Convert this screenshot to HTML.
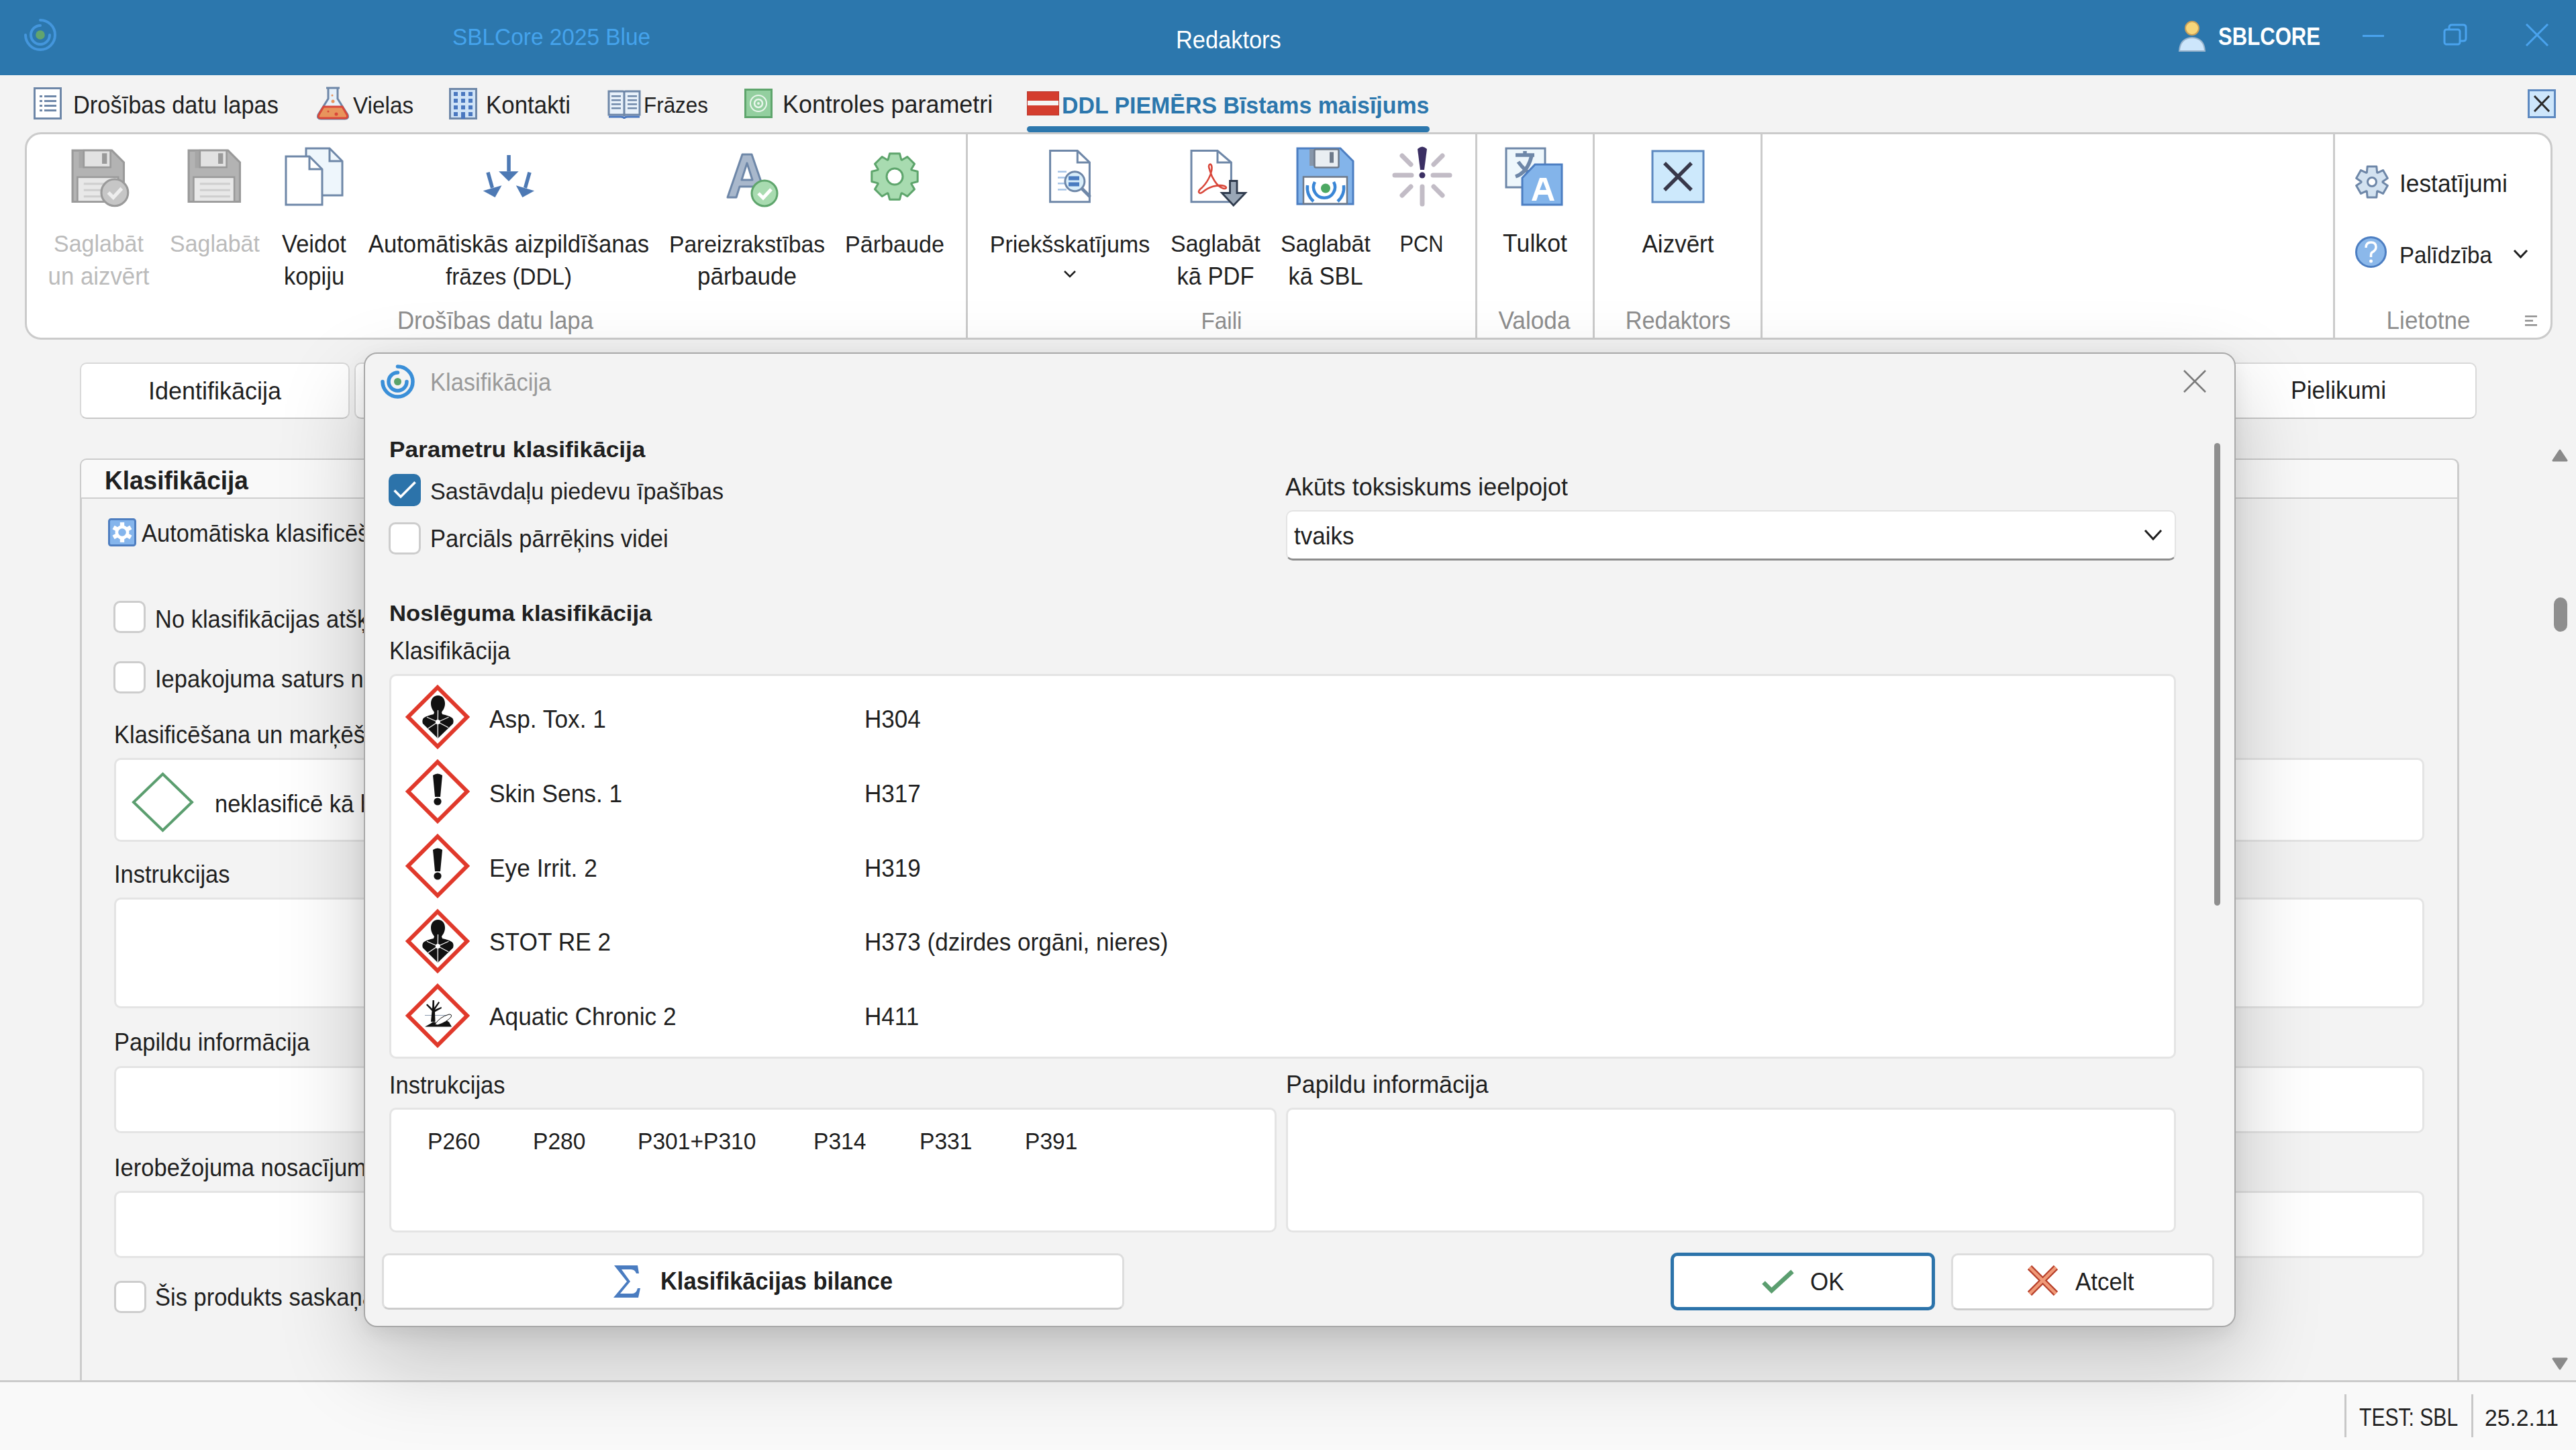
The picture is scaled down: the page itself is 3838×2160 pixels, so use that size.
<!DOCTYPE html>
<html><head><meta charset="utf-8"><title>SBLCore</title>
<style>
html,body{margin:0;padding:0;}
body{width:3838px;height:2160px;position:relative;overflow:hidden;background:#f3f3f3;font-family:"Liberation Sans",sans-serif;}
.t{position:absolute;white-space:nowrap;line-height:1;}
.r{position:absolute;}
svg.r{overflow:visible;}
</style></head><body>
<div class="r" style="left:0px;top:0px;width:3838px;height:112px;background:#2c77ad"></div>
<svg class="r" style="left:34px;top:27px;" width="52" height="50" viewBox="0 0 52 50"><g fill="none" stroke="#4496dc" stroke-width="4" stroke-linecap="round"><path d="M26 3 A22 22 0 1 1 4 25"/><path d="M40 25 A14 14 0 1 1 26 11"/></g><circle cx="26" cy="25" r="6.8" fill="#62a46e"/></svg>
<div class="t" style="left:674px;top:38.7px;font-size:33.4px;color:#45a3ec;font-weight:400;transform:scaleY(1.05);transform-origin:0 28.3px;">SBLCore 2025 Blue</div>
<div class="t" style="left:1752px;top:42.9px;font-size:34.4px;color:#ffffff;font-weight:400;transform:scaleY(1.05);transform-origin:0 29.1px;">Redaktors</div>
<svg class="r" style="left:3245px;top:31px;" width="42" height="46" viewBox="0 0 42 46"><circle cx="21" cy="11" r="10" fill="#f8d67a" stroke="#c9a05a" stroke-width="2"/><path d="M2 45 Q3 26 21 25 Q39 26 40 45 Z" fill="#cde6fb" stroke="#9ab4cc" stroke-width="2"/></svg>
<div class="t" style="left:3305px;top:40.7px;font-size:31.1px;color:#ffffff;font-weight:700;transform:scaleY(1.18);transform-origin:0 26.3px;">SBLCORE</div>
<div class="r" style="left:3520px;top:52px;width:32px;height:3px;background:#4aa3ee"></div>
<svg class="r" style="left:3640px;top:35px;" width="36" height="33" viewBox="0 0 36 33"><g fill="none" stroke="#4aa3ee" stroke-width="3"><rect x="2" y="9" width="23" height="22" rx="3"/><path d="M9 9 V6 Q9 2 13 2 H30 Q34 2 34 6 V22 Q34 26 30 26 H25"/></g></svg>
<svg class="r" style="left:3763px;top:35px;" width="34" height="34" viewBox="0 0 34 34"><g stroke="#4aa3ee" stroke-width="3"><path d="M1 1 L33 33 M33 1 L1 33"/></g></svg>
<div class="r" style="left:0px;top:112px;width:3838px;height:85px;background:#f3f3f3"></div>
<svg class="r" style="left:50px;top:130px;" width="42" height="48" viewBox="0 0 42 48"><rect x="1.5" y="1.5" width="39" height="45" fill="#fff" stroke="#6e87a8" stroke-width="3"/><g fill="#6e87a8"><rect x="9" y="12" width="4" height="3"/><rect x="16" y="12" width="18" height="3"/><rect x="9" y="19" width="4" height="3"/><rect x="16" y="19" width="18" height="3"/><rect x="9" y="26" width="4" height="3"/><rect x="16" y="26" width="18" height="3"/><rect x="9" y="33" width="4" height="3"/><rect x="16" y="33" width="18" height="3"/></g></svg>
<div class="t" style="left:109px;top:139.9px;font-size:34.4px;color:#1f1f1f;font-weight:400;transform:scaleY(1.05);transform-origin:0 29.1px;">Drošības datu lapas</div>
<svg class="r" style="left:471px;top:129px;" width="50" height="50" viewBox="0 0 50 50"><path d="M15 2 H35 M18 2 V18 L3 42 Q1 48 7 48 H43 Q49 48 47 42 L32 18 V2" fill="#e7f1fa" stroke="#6e87a8" stroke-width="3"/><path d="M11 30 H39 L46 42 Q48 47 43 47 H7 Q2 47 4 42 Z" fill="#e8945c" stroke="#d9473a" stroke-width="3"/><circle cx="25" cy="22" r="2.5" fill="#e8945c"/><circle cx="24" cy="13" r="1.5" fill="#e8945c"/><circle cx="30" cy="41" r="2.5" fill="#d9473a"/><circle cx="18" cy="37" r="1.5" fill="#d9473a"/></svg>
<div class="t" style="left:526px;top:140.8px;font-size:33.3px;color:#1f1f1f;font-weight:400;transform:scaleY(1.05);transform-origin:0 28.2px;">Vielas</div>
<svg class="r" style="left:669px;top:131px;" width="42" height="47" viewBox="0 0 42 47"><rect x="1.5" y="1.5" width="39" height="44" fill="#cfe3f7" stroke="#6e87a8" stroke-width="3"/><g fill="#4a78c0"><rect x="7" y="6" width="6" height="6"/><rect x="18" y="6" width="6" height="6"/><rect x="29" y="6" width="6" height="6"/><rect x="7" y="16" width="6" height="6"/><rect x="18" y="16" width="6" height="6"/><rect x="29" y="16" width="6" height="6"/><rect x="7" y="26" width="6" height="6"/><rect x="18" y="26" width="6" height="6"/><rect x="29" y="26" width="6" height="6"/><rect x="7" y="36" width="6" height="6"/><rect x="29" y="36" width="6" height="6"/><rect x="18" y="36" width="6" height="10"/></g></svg>
<div class="t" style="left:724px;top:139.5px;font-size:34.9px;color:#1f1f1f;font-weight:400;transform:scaleY(1.05);transform-origin:0 29.5px;">Kontakti</div>
<svg class="r" style="left:905px;top:133px;" width="50" height="45" viewBox="0 0 50 45"><path d="M2 3 H23 Q25 3 25 5 V40 Q25 38 23 38 H2 Z M48 3 H27 Q25 3 25 5 V40 Q25 38 27 38 H48 Z" fill="#e8f1fa" stroke="#6e87a8" stroke-width="3"/><path d="M2 41 H20 Q25 41 25 44 Q25 41 30 41 H48" fill="none" stroke="#4a78c0" stroke-width="3"/><g fill="#6e87a8"><rect x="6" y="9" width="14" height="2.5"/><rect x="6" y="15" width="14" height="2.5"/><rect x="6" y="21" width="14" height="2.5"/><rect x="6" y="27" width="14" height="2.5"/><rect x="30" y="9" width="14" height="2.5"/><rect x="30" y="15" width="14" height="2.5"/><rect x="30" y="21" width="14" height="2.5"/><rect x="30" y="27" width="14" height="2.5"/></g></svg>
<div class="t" style="left:959px;top:142.4px;font-size:31.4px;color:#1f1f1f;font-weight:400;transform:scaleY(1.05);transform-origin:0 26.6px;">Frāzes</div>
<svg class="r" style="left:1109px;top:132px;" width="42" height="44" viewBox="0 0 42 44"><rect x="1.5" y="1.5" width="39" height="41" fill="#93cf9f" stroke="#5ea56c" stroke-width="3"/><circle cx="21" cy="22" r="12" fill="none" stroke="#e9f6ec" stroke-width="2"/><circle cx="21" cy="22" r="6" fill="none" stroke="#e9f6ec" stroke-width="2.5"/><circle cx="21" cy="22" r="2" fill="#e9f6ec"/></svg>
<div class="t" style="left:1166px;top:138.6px;font-size:35.9px;color:#1f1f1f;font-weight:400;transform:scaleY(1.05);transform-origin:0 30.4px;">Kontroles parametri</div>
<svg class="r" style="left:1530px;top:136px;" width="48" height="36" viewBox="0 0 48 36"><rect x="0" y="0" width="48" height="36" fill="#d43d2e"/><rect x="0" y="14" width="48" height="7" fill="#f4f4f4"/><rect x="0.5" y="0.5" width="47" height="35" fill="none" stroke="#b8352a" stroke-width="1"/></svg>
<div class="t" style="left:1582px;top:140.8px;font-size:33.9px;color:#2c77ad;font-weight:700;transform:scaleY(1.05);transform-origin:0 28.7px;">DDL PIEMĒRS Bīstams maisījums</div>
<div class="r" style="left:1530px;top:188px;width:600px;height:9px;background:#2c77ad;border-radius:5px"></div>
<svg class="r" style="left:3766px;top:133px;" width="42" height="43" viewBox="0 0 42 43"><rect x="1.5" y="1.5" width="39" height="40" fill="#cde6fb" stroke="#5d89c0" stroke-width="3"/><path d="M10 10 L32 33 M32 10 L10 33" stroke="#2a2a2a" stroke-width="3"/></svg>
<div class="r" style="left:119px;top:540px;width:402px;height:84px;background:#fff;border:2px solid #d9d9d9;border-bottom-color:#c8c8c8;border-radius:10px;box-sizing:border-box"></div>
<div class="t" style="left:-80px;width:800px;text-align:center;top:564.5px;font-size:36px;color:#1f1f1f;font-weight:400;transform:scaleY(1.05);transform-origin:0 30.5px;">Identifikācija</div>
<div class="r" style="left:528px;top:540px;width:172px;height:84px;background:#fff;border:2px solid #d9d9d9;border-bottom-color:#c8c8c8;border-radius:10px;box-sizing:border-box"></div>
<div class="r" style="left:3200px;top:540px;width:490px;height:84px;background:#fff;border:2px solid #d9d9d9;border-bottom-color:#c8c8c8;border-radius:10px;box-sizing:border-box"></div>
<div class="t" style="left:3413px;top:564.9px;font-size:35.5px;color:#1f1f1f;font-weight:400;transform:scaleY(1.05);transform-origin:0 30.1px;">Pielikumi</div>
<div class="r" style="left:119px;top:683px;width:3545px;height:1397px;border:3px solid #cccccc;border-radius:10px;box-sizing:border-box;background:#f3f3f3"></div>
<div class="r" style="left:121px;top:685px;width:3540px;height:58px;background:#f9f9f9;border-bottom:2px solid #cfcfcf;border-radius:8px 8px 0 0;box-sizing:border-box"></div>
<div class="t" style="left:156px;top:697.7px;font-size:37px;color:#1f1f1f;font-weight:700;transform:scaleY(1.05);transform-origin:0 31.3px;">Klasifikācija</div>
<svg class="r" style="left:161px;top:772px;" width="42" height="42" viewBox="0 0 42 42"><rect x="1.5" y="1.5" width="39" height="39" rx="3" fill="#85b5ec" stroke="#4e7ec0" stroke-width="3"/><g transform="translate(21 21)" fill="#fff"><rect x="-3.2" y="-14.9" width="6.4" height="29.8"/><rect x="-3.2" y="-14.9" width="6.4" height="29.8" transform="rotate(60)"/><rect x="-3.2" y="-14.9" width="6.4" height="29.8" transform="rotate(120)"/><circle r="10.5"/><circle r="5.8" fill="#85b5ec"/></g></svg>
<div class="t" style="left:211px;top:777.8px;font-size:34.5px;color:#1f1f1f;font-weight:400;transform:scaleY(1.05);transform-origin:0 29.2px;">Automātiska klasificēšana</div>
<div class="r" style="left:169px;top:895px;width:48px;height:48px;background:#fff;border:3px solid #cdcdcd;border-radius:10px;box-sizing:border-box"></div>
<div class="t" style="left:231px;top:905.8px;font-size:34.5px;color:#1f1f1f;font-weight:400;transform:scaleY(1.05);transform-origin:0 29.2px;">No klasifikācijas atšķirīgs</div>
<div class="r" style="left:169px;top:985px;width:48px;height:48px;background:#fff;border:3px solid #cdcdcd;border-radius:10px;box-sizing:border-box"></div>
<div class="t" style="left:231px;top:994.8px;font-size:34.5px;color:#1f1f1f;font-weight:400;transform:scaleY(1.05);transform-origin:0 29.2px;">Iepakojuma saturs nepārsniedz</div>
<div class="t" style="left:170px;top:1077.8px;font-size:34.5px;color:#1f1f1f;font-weight:400;transform:scaleY(1.05);transform-origin:0 29.2px;">Klasificēšana un marķēšana</div>
<div class="r" style="left:170px;top:1129px;width:3442px;height:125px;background:#fff;border:3px solid #e4e4e4;border-radius:10px;box-sizing:border-box"></div>
<svg class="r" style="left:195px;top:1150px;" width="95" height="90" viewBox="0 0 95 90"><path d="M47.5 3 L91 45 L47.5 87 L4 45 Z" fill="none" stroke="#5b9e6f" stroke-width="4"/></svg>
<div class="t" style="left:320px;top:1180.8px;font-size:34.5px;color:#1f1f1f;font-weight:400;transform:scaleY(1.05);transform-origin:0 29.2px;">neklasificē kā bīstamu</div>
<div class="t" style="left:170px;top:1285.8px;font-size:34.5px;color:#1f1f1f;font-weight:400;transform:scaleY(1.05);transform-origin:0 29.2px;">Instrukcijas</div>
<div class="r" style="left:170px;top:1337px;width:3442px;height:165px;background:#fff;border:3px solid #e4e4e4;border-radius:10px;box-sizing:border-box"></div>
<div class="t" style="left:170px;top:1535.8px;font-size:34.5px;color:#1f1f1f;font-weight:400;transform:scaleY(1.05);transform-origin:0 29.2px;">Papildu informācija</div>
<div class="r" style="left:170px;top:1588px;width:3442px;height:100px;background:#fff;border:3px solid #e4e4e4;border-radius:10px;box-sizing:border-box"></div>
<div class="t" style="left:170px;top:1722.8px;font-size:34.5px;color:#1f1f1f;font-weight:400;transform:scaleY(1.05);transform-origin:0 29.2px;">Ierobežojuma nosacījumi</div>
<div class="r" style="left:170px;top:1774px;width:3442px;height:100px;background:#fff;border:3px solid #e4e4e4;border-radius:10px;box-sizing:border-box"></div>
<div class="r" style="left:170px;top:1908px;width:48px;height:48px;background:#fff;border:3px solid #cdcdcd;border-radius:10px;box-sizing:border-box"></div>
<div class="t" style="left:231px;top:1915.8px;font-size:34.5px;color:#1f1f1f;font-weight:400;transform:scaleY(1.05);transform-origin:0 29.2px;">Šis produkts saskaņā ar</div>
<svg class="r" style="left:3800px;top:664px;" width="28" height="28" viewBox="0 0 28 28"><path d="M14 7 L24 22 H4 Z" fill="#8a8a8a" stroke="#8a8a8a" stroke-width="3" stroke-linejoin="round"/></svg>
<div class="r" style="left:3805px;top:890px;width:20px;height:51px;background:#8e8e8e;border-radius:10px"></div>
<svg class="r" style="left:3800px;top:2017px;" width="28" height="28" viewBox="0 0 28 28"><path d="M14 22 L24 7 H4 Z" fill="#8a8a8a" stroke="#8a8a8a" stroke-width="3" stroke-linejoin="round"/></svg>
<div class="r" style="left:0px;top:2056px;width:3838px;height:104px;background:#f9f9f9;border-top:3px solid #cbcbcb;box-sizing:border-box"></div>
<div class="r" style="left:3493px;top:2077px;width:3px;height:64px;background:#c8c8c8"></div>
<div class="r" style="left:3682px;top:2077px;width:3px;height:64px;background:#c8c8c8"></div>
<div class="t" style="left:3515px;top:2098.5px;font-size:30.1px;color:#1f1f1f;font-weight:400;transform:scaleY(1.22);transform-origin:0 25.5px;">TEST: SBL</div>
<div class="t" style="left:3702px;top:2095.5px;font-size:33.7px;color:#1f1f1f;font-weight:400;transform:scaleY(1.05);transform-origin:0 28.5px;">25.2.11</div>
<div class="r" style="left:37px;top:197px;width:3766px;height:309px;background:#fff;border:3px solid #cbcbcb;border-radius:24px;box-sizing:border-box"></div>
<div class="r" style="left:1439px;top:199px;width:3px;height:305px;background:#cbcbcb"></div>
<div class="r" style="left:2198px;top:199px;width:3px;height:305px;background:#cbcbcb"></div>
<div class="r" style="left:2373px;top:199px;width:3px;height:305px;background:#cbcbcb"></div>
<div class="r" style="left:2623px;top:199px;width:3px;height:305px;background:#cbcbcb"></div>
<div class="r" style="left:3476px;top:199px;width:3px;height:305px;background:#cbcbcb"></div>
<svg class="r" style="left:106px;top:222px;" width="90" height="90" viewBox="0 0 86 86"><path d="M2 2 H58 L75 19 V75 H2 Z" fill="#b3b3b3" stroke="#9a9a9a" stroke-width="3"/><rect x="11" y="3" width="8" height="24" fill="#a6a6a6"/><rect x="18" y="2" width="38" height="24" fill="#e2e2e2" stroke="#9a9a9a" stroke-width="2.5"/><rect x="44" y="6" width="7" height="15" fill="#9a9a9a"/><rect x="9" y="40" width="58" height="35" fill="#e8e8e8" stroke="#9a9a9a" stroke-width="2.5"/><g fill="#cfcfcf"><rect x="18" y="48" width="43" height="3"/><rect x="18" y="57" width="43" height="3"/><rect x="18" y="66" width="43" height="3"/></g><circle cx="62" cy="62" r="19" fill="#c6c6c6" stroke="#9a9a9a" stroke-width="3"/><path d="M53 62 L60 69 L72 56" fill="none" stroke="#eeeeee" stroke-width="5"/></svg>
<div class="t" style="left:-253px;width:800px;text-align:center;top:347.3px;font-size:33.9px;color:#bbbbbb;font-weight:400;transform:scaleY(1.05);transform-origin:0 28.7px;">Saglabāt</div>
<div class="t" style="left:-253px;width:800px;text-align:center;top:394.5px;font-size:34.8px;color:#bbbbbb;font-weight:400;transform:scaleY(1.05);transform-origin:0 29.5px;">un aizvērt</div>
<svg class="r" style="left:279px;top:222px;" width="90" height="90" viewBox="0 0 86 86"><path d="M2 2 H58 L75 19 V75 H2 Z" fill="#b3b3b3" stroke="#9a9a9a" stroke-width="3"/><rect x="11" y="3" width="8" height="24" fill="#a6a6a6"/><rect x="18" y="2" width="38" height="24" fill="#e2e2e2" stroke="#9a9a9a" stroke-width="2.5"/><rect x="44" y="6" width="7" height="15" fill="#9a9a9a"/><rect x="9" y="40" width="58" height="35" fill="#e8e8e8" stroke="#9a9a9a" stroke-width="2.5"/><g fill="#cfcfcf"><rect x="18" y="48" width="43" height="3"/><rect x="18" y="57" width="43" height="3"/><rect x="18" y="66" width="43" height="3"/></g></svg>
<div class="t" style="left:-80px;width:800px;text-align:center;top:347.3px;font-size:33.9px;color:#bbbbbb;font-weight:400;transform:scaleY(1.05);transform-origin:0 28.7px;">Saglabāt</div>
<svg class="r" style="left:424px;top:219px;" width="88" height="88" viewBox="0 0 88 88"><path d="M32 2 H67 L86 21 V72 H32 Z" fill="#eef6fc" stroke="#6e87a8" stroke-width="3"/><path d="M67 2 V21 H86" fill="none" stroke="#6e87a8" stroke-width="3"/><path d="M2 14 H37 L56 33 V86 H2 Z" fill="#fff" stroke="#6e87a8" stroke-width="3"/><path d="M37 14 V33 H56" fill="none" stroke="#6e87a8" stroke-width="3"/></svg>
<div class="t" style="left:68px;width:800px;text-align:center;top:346.8px;font-size:34.5px;color:#1f1f1f;font-weight:400;transform:scaleY(1.05);transform-origin:0 29.2px;">Veidot</div>
<div class="t" style="left:68px;width:800px;text-align:center;top:394.8px;font-size:34.5px;color:#1f1f1f;font-weight:400;transform:scaleY(1.05);transform-origin:0 29.2px;">kopiju</div>
<svg class="r" style="left:716px;top:229px;" width="84" height="68" viewBox="0 0 84 68"><g fill="#4d79b4"><rect x="39.3" y="2" width="5.5" height="24.5"/><path d="M27.1 26.3 H56.6 L42 41 Z"/><path d="M8.3 28.5 L13.6 27.1 L20 50 L15 51.7 Z"/><path d="M3.7 55.3 L31.5 47.3 L21.6 65 Z"/><path d="M70.4 27.1 L75.7 28.5 L69 51.7 L64 50 Z"/><path d="M52.8 47.3 L80.1 55.3 L62.4 65 Z"/></g></svg>
<div class="t" style="left:358px;width:800px;text-align:center;top:346.6px;font-size:34.7px;color:#1f1f1f;font-weight:400;transform:scaleY(1.05);transform-origin:0 29.4px;">Automātiskās aizpildīšanas</div>
<div class="t" style="left:358px;width:800px;text-align:center;top:395.9px;font-size:33.2px;color:#1f1f1f;font-weight:400;transform:scaleY(1.05);transform-origin:0 28.1px;">frāzes (DDL)</div>
<svg class="r" style="left:1082px;top:228px;" width="78" height="82" viewBox="0 0 78 82"><path d="M2 66 L24 2 H38 L60 66 H47 L42 50 H20 L15 66 Z M23 40 H39 L31 15 Z" fill="#a9b8cc" stroke="#6e87a8" stroke-width="3" stroke-linejoin="round"/><circle cx="57" cy="60" r="19" fill="#a8dbb0" stroke="#5ea56c" stroke-width="3"/><path d="M48 60 L55 67 L67 54" fill="none" stroke="#fff" stroke-width="5"/></svg>
<div class="t" style="left:713px;width:800px;text-align:center;top:347.5px;font-size:33.7px;color:#1f1f1f;font-weight:400;transform:scaleY(1.05);transform-origin:0 28.5px;">Pareizrakstības</div>
<div class="t" style="left:713px;width:800px;text-align:center;top:394.4px;font-size:35.0px;color:#1f1f1f;font-weight:400;transform:scaleY(1.05);transform-origin:0 29.6px;">pārbaude</div>
<svg class="r" style="left:1297px;top:225px;" width="72" height="76" viewBox="0 0 72 76"><polygon points="26.16,12.86 28.50,3.81 43.50,3.81 45.84,12.86 46.82,13.26 54.87,8.52 65.48,19.13 60.74,27.18 61.14,28.16 70.19,30.50 70.19,45.50 61.14,47.84 60.74,48.82 65.48,56.87 54.87,67.48 46.82,62.74 45.84,63.14 43.50,72.19 28.50,72.19 26.16,63.14 25.18,62.74 17.13,67.48 6.52,56.87 11.26,48.82 10.86,47.84 1.81,45.50 1.81,30.50 10.86,28.16 11.26,27.18 6.52,19.13 17.13,8.52 25.18,13.26" fill="#a8dbb0" stroke="#5ea56c" stroke-width="3" stroke-linejoin="round"/><circle cx="36" cy="38" r="12" fill="#fff" stroke="#5ea56c" stroke-width="3"/></svg>
<div class="t" style="left:933px;width:800px;text-align:center;top:347.1px;font-size:34.1px;color:#1f1f1f;font-weight:400;transform:scaleY(1.05);transform-origin:0 28.9px;">Pārbaude</div>
<svg class="r" style="left:1562px;top:222px;" width="68" height="82" viewBox="0 0 68 82"><path d="M2.6 2.6 H43.3 L61.4 20 V78.8 H2.6 Z" fill="#fff" stroke="#6e87a8" stroke-width="3"/><path d="M43.3 2.6 V20 H61.4" fill="none" stroke="#6e87a8" stroke-width="3"/><g fill="#a6c4e6"><rect x="14" y="32.5" width="13" height="2.5"/><rect x="14" y="41.3" width="13" height="2.5"/><rect x="14" y="50" width="13" height="2.5"/><rect x="14" y="59.2" width="13" height="2.5"/></g><path d="M50 59 L61 70" stroke="#6e87a8" stroke-width="5" stroke-linecap="round"/><circle cx="39.4" cy="48.2" r="14.5" fill="#d9eefa" stroke="#6e87a8" stroke-width="3"/><g fill="#4a7cc0"><rect x="30" y="40.5" width="16" height="6"/><rect x="30" y="49.5" width="16" height="6"/></g></svg>
<div class="t" style="left:1194px;width:800px;text-align:center;top:347.1px;font-size:34.1px;color:#1f1f1f;font-weight:400;transform:scaleY(1.05);transform-origin:0 28.9px;">Priekšskatījums</div>
<svg class="r" style="left:1584px;top:402px;" width="20" height="12" viewBox="0 0 20 12"><path d="M2 2 L10 10 L18 2" fill="none" stroke="#1f1f1f" stroke-width="2.5"/></svg>
<svg class="r" style="left:1772px;top:222px;" width="86" height="88" viewBox="0 0 86 88"><path d="M3 2.6 H42 L62.4 20 V78.8 H3 Z" fill="#fff" stroke="#6e87a8" stroke-width="3"/><path d="M42 2.6 V20 H62.4" fill="none" stroke="#6e87a8" stroke-width="3"/><path d="M30 30 C27 22 33 20 33.5 27 C34 37 26 52 16 60 C12 64 15 68 20 64 C28 57 42 52 52 55 C57 57 55 60 50 58.5 C41 56 33 42 30 30 Z" fill="none" stroke="#d9473a" stroke-width="2.6"/><path d="M60.5 47.5 H71 V65.5 H83.5 L65.8 84 L48.5 65.5 H60.5 Z" fill="#9aa7b6" stroke="#2f3b4d" stroke-width="2.8" stroke-linejoin="miter"/></svg>
<div class="t" style="left:1411px;width:800px;text-align:center;top:347.3px;font-size:33.9px;color:#1f1f1f;font-weight:400;transform:scaleY(1.05);transform-origin:0 28.7px;">Saglabāt</div>
<div class="t" style="left:1411px;width:800px;text-align:center;top:394.8px;font-size:34.5px;color:#1f1f1f;font-weight:400;transform:scaleY(1.05);transform-origin:0 29.2px;">kā PDF</div>
<svg class="r" style="left:1931px;top:219px;" width="88" height="88" viewBox="0 0 88 88"><path d="M2 2 H66 L85 21 V85 H2 Z" fill="#83b4ea" stroke="#4c7ec2" stroke-width="3"/><rect x="20" y="3" width="8" height="25" fill="#8696aa"/><rect x="27.5" y="3.5" width="36" height="27" rx="2" fill="#e9eef2" stroke="#6e7a8a" stroke-width="2.5"/><rect x="50" y="7.5" width="6" height="16" fill="#6e7a8a"/><rect x="11" y="44.5" width="65" height="40" fill="#fff" stroke="#6e7a8a" stroke-width="2.5"/><g fill="none" stroke="#3a86d6" stroke-width="4.5"><path d="M28 52 A16 16 0 1 0 56 52"/><path d="M17 57 A28 28 0 0 0 26 81"/><path d="M71 57 A28 28 0 0 1 62 81"/></g><circle cx="44" cy="61.5" r="7" fill="#4ca862"/></svg>
<div class="t" style="left:1575px;width:800px;text-align:center;top:347.3px;font-size:33.9px;color:#1f1f1f;font-weight:400;transform:scaleY(1.05);transform-origin:0 28.7px;">Saglabāt</div>
<div class="t" style="left:1575px;width:800px;text-align:center;top:394.8px;font-size:34.5px;color:#1f1f1f;font-weight:400;transform:scaleY(1.05);transform-origin:0 29.2px;">kā SBL</div>
<svg class="r" style="left:2072px;top:215px;" width="94" height="94" viewBox="0 0 94 94"><g stroke="#c2bcc6" stroke-width="7" stroke-linecap="round"><path d="M47 63 V89 M6 46 H31 M63 46 H88 M17 17 L30 30 M77 17 L64 30 M17 76 L30 63 M77 76 L64 63"/></g><path d="M40 7 Q47 0 54 7 L50 38 H44 Z" fill="#3b2f63"/><circle cx="47" cy="46" r="4.5" fill="#3b2f63"/></svg>
<div class="t" style="left:1718px;width:800px;text-align:center;top:349.9px;font-size:30.8px;color:#1f1f1f;font-weight:400;transform:scaleY(1.13);transform-origin:0 26.1px;">PCN</div>
<svg class="r" style="left:2242px;top:219px;" width="90" height="88" viewBox="0 0 90 88"><rect x="2" y="2" width="58" height="58" fill="#eef7fc" stroke="#6e87a8" stroke-width="3"/><path d="M16 12 H44 M30 6 V13 M40 13 Q34 38 16 44 M20 22 Q30 36 42 42" fill="none" stroke="#6e87a8" stroke-width="5.5"/><path d="M45 26 H85 V86 H26 V46 Z" fill="#83b4ea" stroke="#4c7ec2" stroke-width="3"/><path d="M40 80 L52 46 H62 L74 80 H67 L64 71 H50 L47 80 Z M52 64 H62 L57 51 Z" fill="#fff"/></svg>
<div class="t" style="left:1887px;width:800px;text-align:center;top:345.8px;font-size:35.7px;color:#1f1f1f;font-weight:400;transform:scaleY(1.05);transform-origin:0 30.2px;">Tulkot</div>
<svg class="r" style="left:2460px;top:223px;" width="80" height="80" viewBox="0 0 80 80"><rect x="2" y="2" width="76" height="76" fill="#cde9fc" stroke="#5d89c0" stroke-width="3"/><path d="M20 20 L60 60 M60 20 L20 60" stroke="#38384a" stroke-width="5.5"/></svg>
<div class="t" style="left:2100px;width:800px;text-align:center;top:346.4px;font-size:35.0px;color:#1f1f1f;font-weight:400;transform:scaleY(1.05);transform-origin:0 29.6px;">Aizvērt</div>
<svg class="r" style="left:3510px;top:245px;" width="48" height="52" viewBox="0 0 48 52"><polygon points="16.37,11.94 17.18,2.99 30.82,2.99 31.63,11.94 32.36,12.36 40.52,8.59 47.34,20.40 39.99,25.58 39.99,26.42 47.34,31.60 40.52,43.41 32.36,39.64 31.63,40.06 30.82,49.01 17.18,49.01 16.37,40.06 15.64,39.64 7.48,43.41 0.66,31.60 8.01,26.42 8.01,25.58 0.66,20.40 7.48,8.59 15.64,12.36" fill="#d3e2f0" stroke="#6e87a8" stroke-width="3" stroke-linejoin="round"/><circle cx="24" cy="26" r="6.5" fill="#fff" stroke="#6e87a8" stroke-width="3"/></svg>
<div class="t" style="left:3575px;top:256.1px;font-size:35.3px;color:#1f1f1f;font-weight:400;transform:scaleY(1.05);transform-origin:0 29.9px;">Iestatījumi</div>
<svg class="r" style="left:3508px;top:351px;" width="49" height="49" viewBox="0 0 49 49"><circle cx="24.5" cy="24.5" r="22" fill="#8bb8ea" stroke="#4c7ec2" stroke-width="3"/><path d="M17 18 Q17 10 24.5 10 Q32 10 32 17 Q32 22 26 25 Q24.5 26 24.5 30 V32" fill="none" stroke="#fff" stroke-width="3.5"/><circle cx="24.5" cy="38" r="2.5" fill="#fff"/></svg>
<div class="t" style="left:3575px;top:364.0px;font-size:33.1px;color:#1f1f1f;font-weight:400;transform:scaleY(1.05);transform-origin:0 28.0px;">Palīdzība</div>
<svg class="r" style="left:3744px;top:371px;" width="23" height="15" viewBox="0 0 23 15"><path d="M2 2 L11.5 12 L21 2" fill="none" stroke="#1f1f1f" stroke-width="3"/></svg>
<div class="t" style="left:338px;width:800px;text-align:center;top:460.5px;font-size:34.8px;color:#8e8e8e;font-weight:400;transform:scaleY(1.05);transform-origin:0 29.5px;">Drošības datu lapa</div>
<div class="t" style="left:1420px;width:800px;text-align:center;top:461.8px;font-size:33.3px;color:#8e8e8e;font-weight:400;transform:scaleY(1.05);transform-origin:0 28.2px;">Faili</div>
<div class="t" style="left:1886px;width:800px;text-align:center;top:460.2px;font-size:35.2px;color:#8e8e8e;font-weight:400;transform:scaleY(1.05);transform-origin:0 29.8px;">Valoda</div>
<div class="t" style="left:2100px;width:800px;text-align:center;top:460.9px;font-size:34.4px;color:#8e8e8e;font-weight:400;transform:scaleY(1.05);transform-origin:0 29.1px;">Redaktors</div>
<div class="t" style="left:3218px;width:800px;text-align:center;top:460.3px;font-size:35.1px;color:#8e8e8e;font-weight:400;transform:scaleY(1.05);transform-origin:0 29.7px;">Lietotne</div>
<svg class="r" style="left:3762px;top:469px;" width="20" height="18" viewBox="0 0 20 18"><g fill="#8e8e8e"><rect x="0" y="1" width="18" height="2.5"/><rect x="0" y="7.5" width="12" height="2.5"/><rect x="0" y="14" width="18" height="2.5"/></g></svg>
<div class="r" style="left:542px;top:525px;width:2789px;height:1452px;background:#f3f3f3;border:2px solid #a9a9a9;border-radius:20px;box-sizing:border-box;box-shadow:0 50px 130px rgba(0,0,0,0.20), 0 10px 30px rgba(0,0,0,0.08)"></div>
<svg class="r" style="left:567px;top:543px;" width="51" height="51" viewBox="0 0 51 51"><g fill="none" stroke="#3a8fd8" stroke-width="5.5" stroke-linecap="round"><path d="M25.5 3 A22.5 22.5 0 1 1 3 25.5"/><path d="M39 25.5 A13.5 13.5 0 1 1 25.5 12"/></g><circle cx="25.5" cy="25.5" r="5.5" fill="#5aa36a"/></svg>
<div class="t" style="left:641px;top:552.8px;font-size:34.5px;color:#9a9a9a;font-weight:400;transform:scaleY(1.05);transform-origin:0 29.2px;">Klasifikācija</div>
<svg class="r" style="left:3252px;top:550px;" width="36" height="36" viewBox="0 0 36 36"><path d="M2 2 L34 34 M34 2 L2 34" stroke="#7a7a7a" stroke-width="2.5"/></svg>
<div class="t" style="left:580px;top:651.2px;font-size:35.2px;color:#1f1f1f;font-weight:700;transform:scaleY(0.96);transform-origin:0 29.8px;">Parametru klasifikācija</div>
<div class="r" style="left:579px;top:706px;width:48px;height:48px;background:#2c73aa;border-radius:10px"></div>
<svg class="r" style="left:579px;top:706px;" width="48" height="48" viewBox="0 0 48 48"><path d="M8.6 24.6 L18 34 L39.6 12.2" fill="none" stroke="#fff" stroke-width="3.6"/></svg>
<div class="t" style="left:641px;top:715.0px;font-size:34.2px;color:#1f1f1f;font-weight:400;transform:scaleY(1.05);transform-origin:0 29.0px;">Sastāvdaļu piedevu īpašības</div>
<div class="r" style="left:579px;top:778px;width:48px;height:48px;background:#fff;border:3px solid #cdcdcd;border-radius:10px;box-sizing:border-box"></div>
<div class="t" style="left:641px;top:785.8px;font-size:34.5px;color:#1f1f1f;font-weight:400;transform:scaleY(1.05);transform-origin:0 29.2px;">Parciāls pārrēķins videi</div>
<div class="t" style="left:1915px;top:708.6px;font-size:35.9px;color:#1f1f1f;font-weight:400;transform:scaleY(1.05);transform-origin:0 30.4px;">Akūts toksiskums ieelpojot</div>
<div class="r" style="left:1916px;top:760px;width:1326px;height:75px;background:#fff;border:2px solid #e3e3e3;border-bottom:3px solid #8d8d8d;border-radius:10px;box-sizing:border-box"></div>
<div class="t" style="left:1928px;top:781.4px;font-size:35px;color:#1f1f1f;font-weight:400;transform:scaleY(1.05);transform-origin:0 29.6px;">tvaiks</div>
<svg class="r" style="left:3194px;top:787px;" width="28" height="19" viewBox="0 0 28 19"><path d="M2 3 L14 16 L26 3" fill="none" stroke="#1f1f1f" stroke-width="3"/></svg>
<div class="t" style="left:580px;top:895.6px;font-size:34.7px;color:#1f1f1f;font-weight:700;transform:scaleY(0.97);transform-origin:0 29.4px;">Noslēguma klasifikācija</div>
<div class="t" style="left:580px;top:952.8px;font-size:34.5px;color:#1f1f1f;font-weight:400;transform:scaleY(1.05);transform-origin:0 29.2px;">Klasifikācija</div>
<div class="r" style="left:580px;top:1004px;width:2662px;height:573px;background:#fff;border:3px solid #e4e4e4;border-radius:10px;box-sizing:border-box"></div>
<svg class="r" style="left:604px;top:1020px;" width="96" height="96" viewBox="0 0 96 96"><path d="M48 4 L92 48 L48 92 L4 48 Z" fill="#fff" stroke="#e0392b" stroke-width="6"/><path d="M48.5 16 C42 16 38 21 38 28 C38 34 41 38 43 41 L42 44 C36 45 31 47 28 49 C25 51 25 55 26 58 L48.3 80 L71 58 C72 55 72 51 69 49 C66 47 61 45 55 44 L54 41 C56 38 59 34 59 28 C59 21 55 16 48.5 16 Z" fill="#111"/><g stroke="#fff" stroke-width="1.3" stroke-linecap="round"><path d="M48.3 55.5 L48.5 38.5 M48.3 55.5 L32.5 48.5 M48.3 55.5 L64 48.5 M48.3 55.5 L34 65 M48.3 55.5 L63.5 63.5 M48.3 55.5 L48.3 79"/></g><circle cx="48.3" cy="55.5" r="3.5" fill="#fff"/></svg>
<div class="t" style="left:729px;top:1054.1px;font-size:35.3px;color:#1f1f1f;font-weight:400;transform:scaleY(1.05);transform-origin:0 29.9px;">Asp. Tox. 1</div>
<div class="t" style="left:1288px;top:1054.3px;font-size:35.1px;color:#1f1f1f;font-weight:400;transform:scaleY(1.05);transform-origin:0 29.7px;">H304</div>
<svg class="r" style="left:604px;top:1131px;" width="96" height="96" viewBox="0 0 96 96"><path d="M48 4 L92 48 L48 92 L4 48 Z" fill="#fff" stroke="#e0392b" stroke-width="6"/><path d="M41 24 Q48 19 55 24 L52 56 H44 Z" fill="#111"/><circle cx="48" cy="63" r="5.6" fill="#111"/></svg>
<div class="t" style="left:729px;top:1165.1px;font-size:35.3px;color:#1f1f1f;font-weight:400;transform:scaleY(1.05);transform-origin:0 29.9px;">Skin Sens. 1</div>
<div class="t" style="left:1288px;top:1165.3px;font-size:35.1px;color:#1f1f1f;font-weight:400;transform:scaleY(1.05);transform-origin:0 29.7px;">H317</div>
<svg class="r" style="left:604px;top:1242px;" width="96" height="96" viewBox="0 0 96 96"><path d="M48 4 L92 48 L48 92 L4 48 Z" fill="#fff" stroke="#e0392b" stroke-width="6"/><path d="M41 24 Q48 19 55 24 L52 56 H44 Z" fill="#111"/><circle cx="48" cy="63" r="5.6" fill="#111"/></svg>
<div class="t" style="left:729px;top:1276.1px;font-size:35.3px;color:#1f1f1f;font-weight:400;transform:scaleY(1.05);transform-origin:0 29.9px;">Eye Irrit. 2</div>
<div class="t" style="left:1288px;top:1276.3px;font-size:35.1px;color:#1f1f1f;font-weight:400;transform:scaleY(1.05);transform-origin:0 29.7px;">H319</div>
<svg class="r" style="left:604px;top:1354px;" width="96" height="96" viewBox="0 0 96 96"><path d="M48 4 L92 48 L48 92 L4 48 Z" fill="#fff" stroke="#e0392b" stroke-width="6"/><path d="M48.5 16 C42 16 38 21 38 28 C38 34 41 38 43 41 L42 44 C36 45 31 47 28 49 C25 51 25 55 26 58 L48.3 80 L71 58 C72 55 72 51 69 49 C66 47 61 45 55 44 L54 41 C56 38 59 34 59 28 C59 21 55 16 48.5 16 Z" fill="#111"/><g stroke="#fff" stroke-width="1.3" stroke-linecap="round"><path d="M48.3 55.5 L48.5 38.5 M48.3 55.5 L32.5 48.5 M48.3 55.5 L64 48.5 M48.3 55.5 L34 65 M48.3 55.5 L63.5 63.5 M48.3 55.5 L48.3 79"/></g><circle cx="48.3" cy="55.5" r="3.5" fill="#fff"/></svg>
<div class="t" style="left:729px;top:1386.1px;font-size:35.3px;color:#1f1f1f;font-weight:400;transform:scaleY(1.05);transform-origin:0 29.9px;">STOT RE 2</div>
<div class="t" style="left:1288px;top:1386.3px;font-size:35.1px;color:#1f1f1f;font-weight:400;transform:scaleY(1.05);transform-origin:0 29.7px;">H373 (dzirdes orgāni, nieres)</div>
<svg class="r" style="left:604px;top:1465px;" width="96" height="96" viewBox="0 0 96 96"><path d="M48 4 L92 48 L48 92 L4 48 Z" fill="#fff" stroke="#e0392b" stroke-width="6"/><path d="M29 47.5 H68" stroke="#8a9bb0" stroke-width="1"/><path d="M38 57 L39.5 41 L31 32 L32.5 30.5 L40 37.5 L40.5 25 L43 25 L43 36 L49.5 27 L51 28.5 L44 39 L53.5 35 L54 37 L44 42.5 L44.5 57 Z" fill="#111"/><path d="M29 64.5 L38 59.5 Q41 56 45 58 L47 61 Q55 56 61 55 L65 57.5 L67 61 L69 64.5 Z" fill="#111"/><path d="M44 61 Q51 50 65 46 Q70 46 68 50 Q61 58 48 62 Z" fill="#fff" stroke="#111" stroke-width="1"/></svg>
<div class="t" style="left:729px;top:1497.1px;font-size:35.3px;color:#1f1f1f;font-weight:400;transform:scaleY(1.05);transform-origin:0 29.9px;">Aquatic Chronic 2</div>
<div class="t" style="left:1288px;top:1497.3px;font-size:35.1px;color:#1f1f1f;font-weight:400;transform:scaleY(1.05);transform-origin:0 29.7px;">H411</div>
<div class="t" style="left:580px;top:1599.8px;font-size:34.5px;color:#1f1f1f;font-weight:400;transform:scaleY(1.05);transform-origin:0 29.2px;">Instrukcijas</div>
<div class="t" style="left:1916px;top:1598.8px;font-size:35.7px;color:#1f1f1f;font-weight:400;transform:scaleY(1.05);transform-origin:0 30.2px;">Papildu informācija</div>
<div class="r" style="left:580px;top:1650px;width:1322px;height:186px;background:#fff;border:3px solid #e4e4e4;border-radius:10px;box-sizing:border-box"></div>
<div class="r" style="left:1916px;top:1650px;width:1326px;height:186px;background:#fff;border:3px solid #e4e4e4;border-radius:10px;box-sizing:border-box"></div>
<div class="t" style="left:637px;top:1683.6px;font-size:33.6px;color:#1f1f1f;font-weight:400;transform:scaleY(1.05);transform-origin:0 28.4px;">P260</div>
<div class="t" style="left:794px;top:1683.6px;font-size:33.6px;color:#1f1f1f;font-weight:400;transform:scaleY(1.05);transform-origin:0 28.4px;">P280</div>
<div class="t" style="left:950px;top:1683.6px;font-size:33.6px;color:#1f1f1f;font-weight:400;transform:scaleY(1.05);transform-origin:0 28.4px;">P301+P310</div>
<div class="t" style="left:1212px;top:1683.6px;font-size:33.6px;color:#1f1f1f;font-weight:400;transform:scaleY(1.05);transform-origin:0 28.4px;">P314</div>
<div class="t" style="left:1370px;top:1683.6px;font-size:33.6px;color:#1f1f1f;font-weight:400;transform:scaleY(1.05);transform-origin:0 28.4px;">P331</div>
<div class="t" style="left:1527px;top:1683.6px;font-size:33.6px;color:#1f1f1f;font-weight:400;transform:scaleY(1.05);transform-origin:0 28.4px;">P391</div>
<div class="r" style="left:3299px;top:660px;width:9px;height:689px;background:#8e8e8e;border-radius:5px"></div>
<div class="r" style="left:569px;top:1867px;width:1106px;height:84px;background:#fff;border:3px solid #dddddd;border-bottom-color:#cccccc;border-radius:10px;box-sizing:border-box"></div>
<svg class="r" style="left:912px;top:1883px;" width="42" height="52" viewBox="0 0 42 52"><path d="M3 2 H38 L40 14 H36 Q34 8 28 8 H14 L27 26 L12 44 H30 Q36 44 38 36 H42 L39 50 H2 L22 26 Z" fill="#4a7cc0"/></svg>
<div class="t" style="left:984px;top:1891.9px;font-size:34.4px;color:#1f1f1f;font-weight:700;transform:scaleY(1.05);transform-origin:0 29.1px;">Klasifikācijas bilance</div>
<div class="r" style="left:2489px;top:1866px;width:394px;height:86px;background:#fff;border:5.5px solid #2c73aa;border-radius:10px;box-sizing:border-box"></div>
<svg class="r" style="left:2623px;top:1890px;" width="51" height="40" viewBox="0 0 51 40"><path d="M4.5 20.5 L16.5 32.5 L47.5 4" fill="none" stroke="#5b9e6f" stroke-width="6.5"/></svg>
<div class="t" style="left:2697px;top:1892.4px;font-size:35px;color:#1f1f1f;font-weight:400;transform:scaleY(1.05);transform-origin:0 29.6px;">OK</div>
<div class="r" style="left:2907px;top:1867px;width:392px;height:85px;background:#fff;border:3px solid #dddddd;border-bottom-color:#cccccc;border-radius:10px;box-sizing:border-box"></div>
<svg class="r" style="left:3018px;top:1883px;" width="50" height="48" viewBox="0 0 50 48"><path d="M6 5 L45 44 M45 5 L6 44" stroke="#b8412c" stroke-width="9"/><path d="M6 5 L45 44 M45 5 L6 44" stroke="#f09a78" stroke-width="4.5"/></svg>
<div class="t" style="left:3092px;top:1892.4px;font-size:35px;color:#1f1f1f;font-weight:400;transform:scaleY(1.05);transform-origin:0 29.6px;">Atcelt</div>
</body></html>
